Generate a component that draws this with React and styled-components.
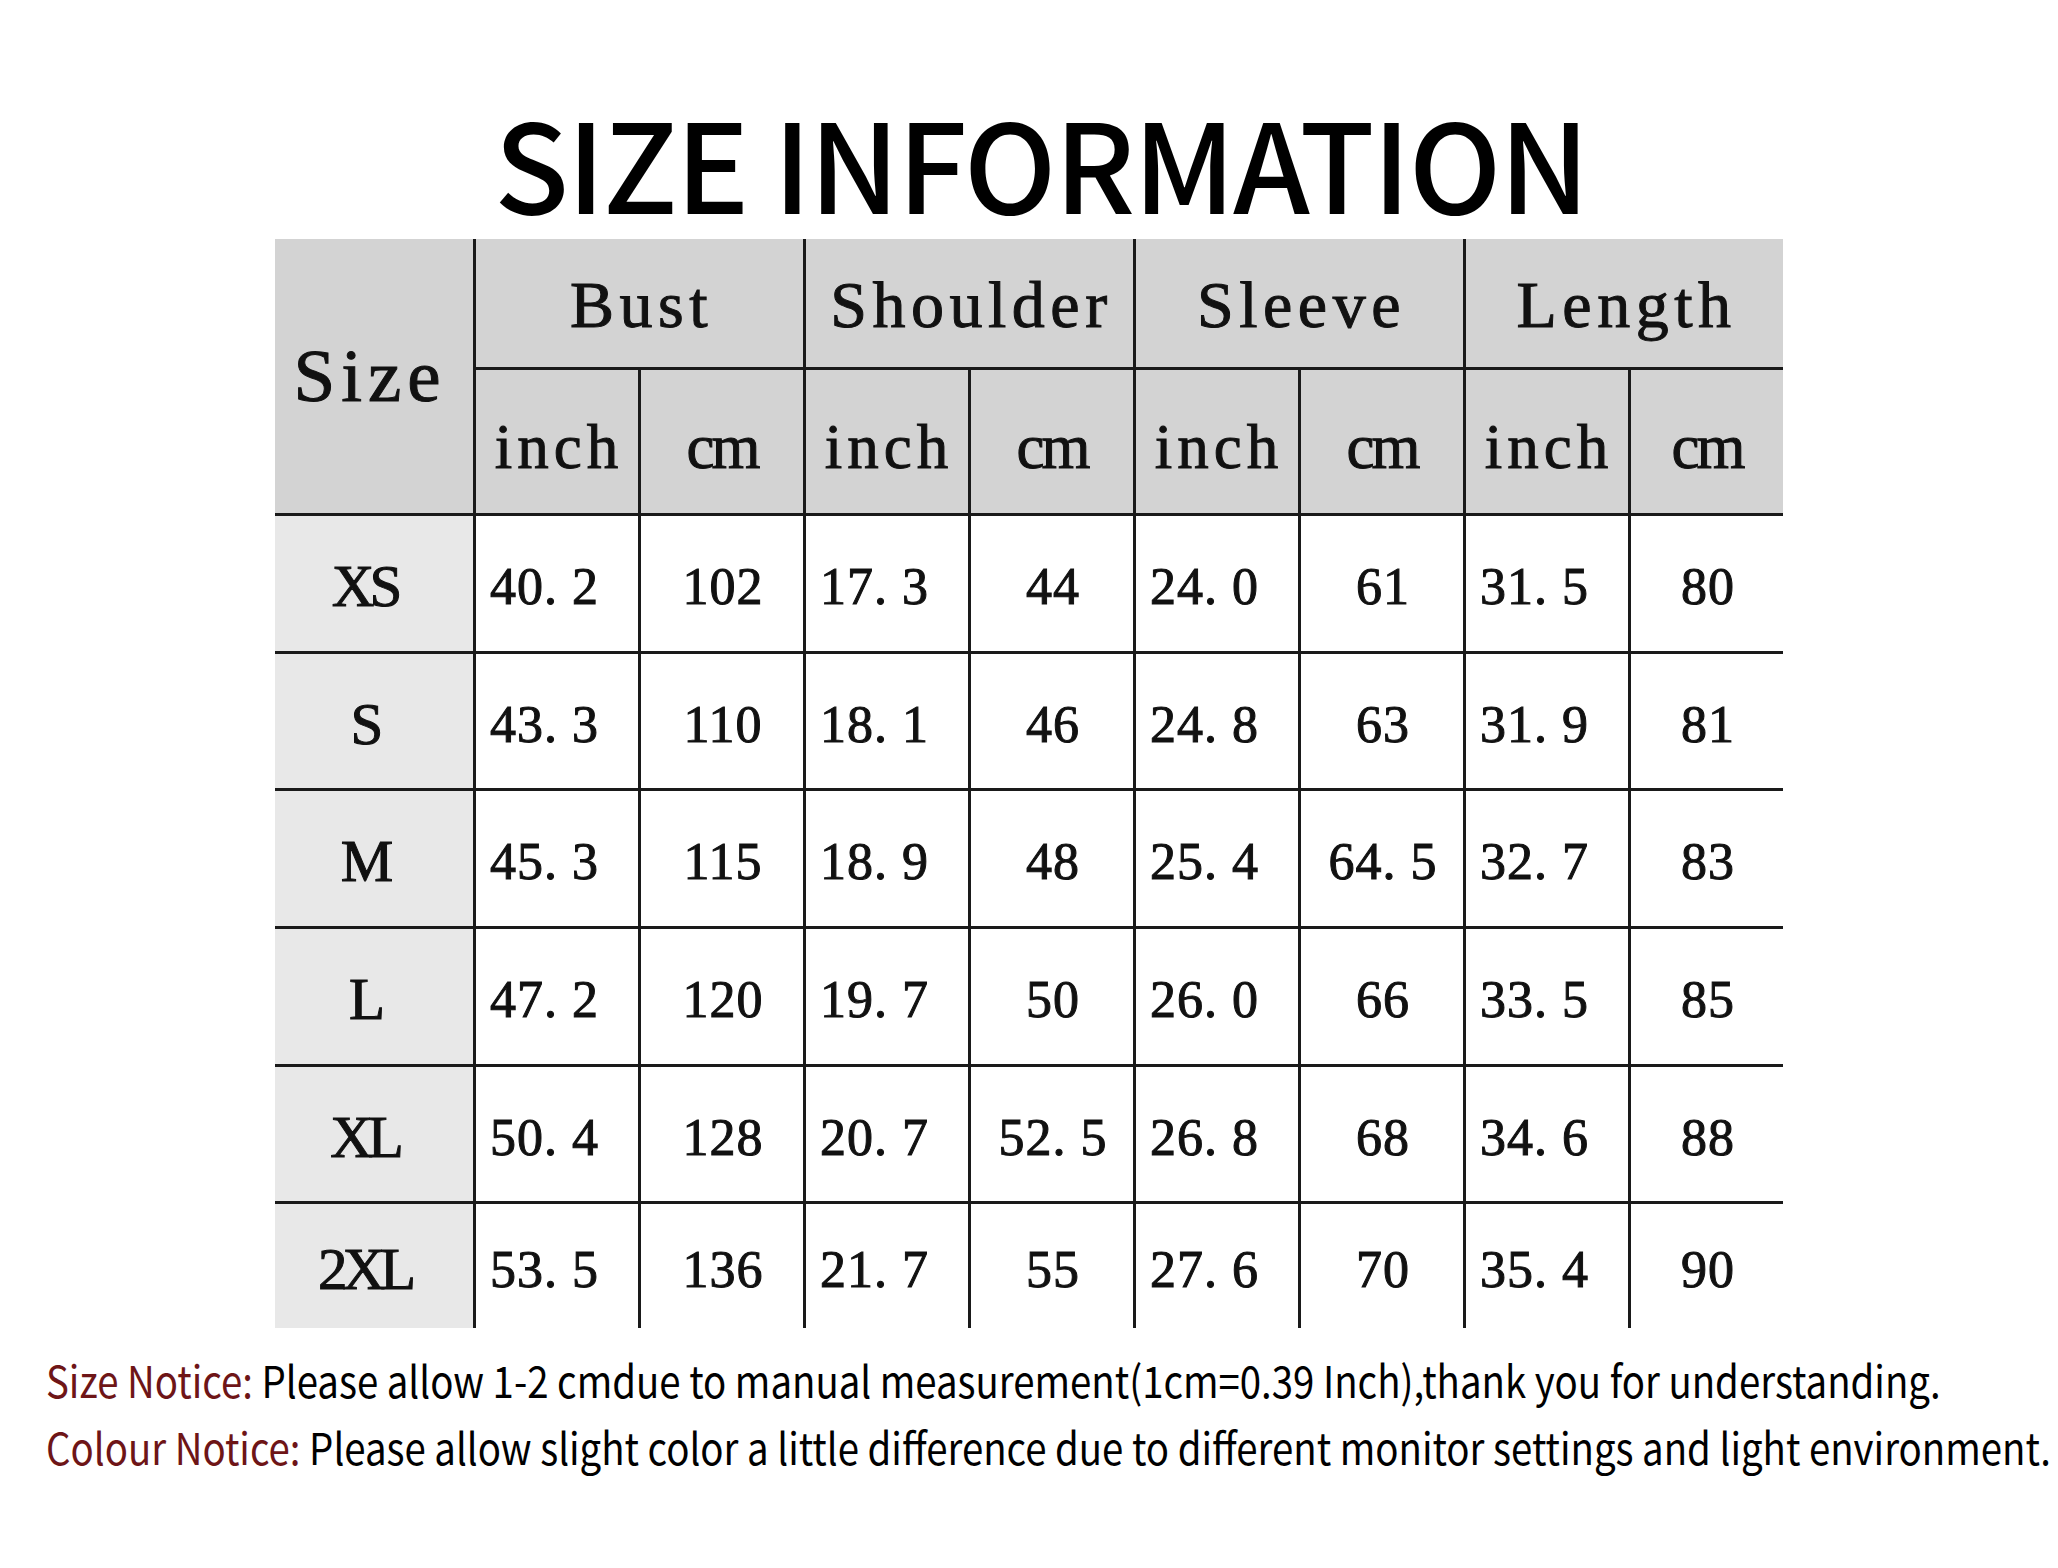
import React from 'react'
import styled, { createGlobalStyle } from 'styled-components'

const GlobalStyle = createGlobalStyle`
  html, body {
    margin: 0;
    padding: 0;
    background: #fff;
  }
`

const Page = styled.div`
  width: 2058px;
  height: 1568px;
  overflow: hidden;
  display: flex;
  flex-direction: column;
  background: #fff;
`

const Title = styled.h1`
  margin: 99px 0 17px;
  padding-left: 24px;
  font-family: 'Noto Sans CJK SC', 'Noto Sans', sans-serif;
  font-size: 123px;
  font-weight: 500;
  line-height: 123px;
  text-align: center;
  color: #000;
  letter-spacing: -2px;
`

const SizeTable = styled.div`
  align-self: center;
  display: grid;
  grid-template-columns: 198px repeat(7, 165px) 155px;
  grid-template-rows: 128px 146px repeat(5, 137.7px) 127px;
  font-family: 'Liberation Serif', 'Times New Roman', serif;
  color: #111;
  -webkit-text-stroke: 1px #111;
`

const Cell = styled.div`
  box-sizing: border-box;
  display: flex;
  align-items: center;
  justify-content: center;
  white-space: nowrap;
`

const Corner = styled(Cell)`
  grid-row: span 2;
  background: #d3d3d3;
  font-size: 75px;
  letter-spacing: 6px;
  padding-right: 8px;
`

const GroupHead = styled(Cell)`
  grid-column: span 2;
  background: #d3d3d3;
  border-left: 3px solid #1a1a1a;
  font-size: 66px;
  letter-spacing: 5.5px;
  padding: 4px 0 0 4px;
`

const UnitHead = styled(Cell)`
  background: #d3d3d3;
  border-left: 3px solid #1a1a1a;
  border-top: 3px solid #1a1a1a;
  font-size: 63px;
  letter-spacing: ${({ $unit }) => ($unit === 'inch' ? '5px' : '-3px')};
  padding: 12px 0 0 ${({ $unit }) => ($unit === 'inch' ? '4px' : '0')};
`

const RowLabel = styled(Cell)`
  background: #e8e8e8;
  border-top: 3px solid #1a1a1a;
  font-size: 59px;
  letter-spacing: -5px;
  padding: 6px 19px 0 0;
`

const Value = styled(Cell)`
  background: #fff;
  border-top: 3px solid #1a1a1a;
  border-left: 3px solid #1a1a1a;
  font-size: 52px;
  letter-spacing: 1px;
  padding-top: 6px;
  justify-content: ${({ $unit }) => ($unit === 'inch' ? 'flex-start' : 'center')};
  padding-left: ${({ $unit }) => ($unit === 'inch' ? '14px' : '2px')};
`

const Dot = styled.span`
  margin-right: 14px;
`

const Notices = styled.div`
  margin-top: 18px;
  padding-left: 46px;
  font-family: 'Noto Sans CJK SC', 'Noto Sans', sans-serif;
  font-size: 44px;
  line-height: 67px;
  color: #000;
  white-space: nowrap;
`

// the source type is a condensed cut, so squeeze the line horizontally
const Notice = styled.p`
  margin: 0;
  transform: scaleX(0.872);
  transform-origin: left center;
`

const NoticeLabel = styled.span`
  color: #6e1517;
`

const groups = ['Bust', 'Shoulder', 'Sleeve', 'Length']
const units = ['inch', 'cm']

const rows = [
  ['XS', '40.2', '102', '17.3', '44', '24.0', '61', '31.5', '80'],
  ['S', '43.3', '110', '18.1', '46', '24.8', '63', '31.9', '81'],
  ['M', '45.3', '115', '18.9', '48', '25.4', '64.5', '32.7', '83'],
  ['L', '47.2', '120', '19.7', '50', '26.0', '66', '33.5', '85'],
  ['XL', '50.4', '128', '20.7', '52.5', '26.8', '68', '34.6', '88'],
  ['2XL', '53.5', '136', '21.7', '55', '27.6', '70', '35.4', '90']
]

const Num = ({ value }) => {
  const [whole, frac] = value.split('.')
  if (frac === undefined) return value
  return (
    <>
      {whole}
      <Dot>.</Dot>
      {frac}
    </>
  )
}

const App = () => (
  <Page>
    <GlobalStyle />
    <Title>SIZE INFORMATION</Title>

    <SizeTable>
      <Corner>Size</Corner>
      {groups.map(g => (
        <GroupHead key={g}>{g}</GroupHead>
      ))}
      {groups.map(g =>
        units.map(u => (
          <UnitHead key={g + u} $unit={u}>
            {u}
          </UnitHead>
        ))
      )}
      {rows.map(([label, ...values]) => (
        <React.Fragment key={label}>
          <RowLabel>{label}</RowLabel>
          {values.map((v, i) => (
            <Value key={i} $unit={units[i % 2]}>
              <Num value={v} />
            </Value>
          ))}
        </React.Fragment>
      ))}
    </SizeTable>

    <Notices>
      <Notice>
        <NoticeLabel>Size Notice:</NoticeLabel> Please allow 1-2 cmdue to manual
        measurement(1cm=0.39 Inch),thank you for understanding.
      </Notice>
      <Notice>
        <NoticeLabel>Colour Notice:</NoticeLabel> Please allow slight color a
        little difference due to different monitor settings and light
        environment.
      </Notice>
    </Notices>
  </Page>
)

export default App
